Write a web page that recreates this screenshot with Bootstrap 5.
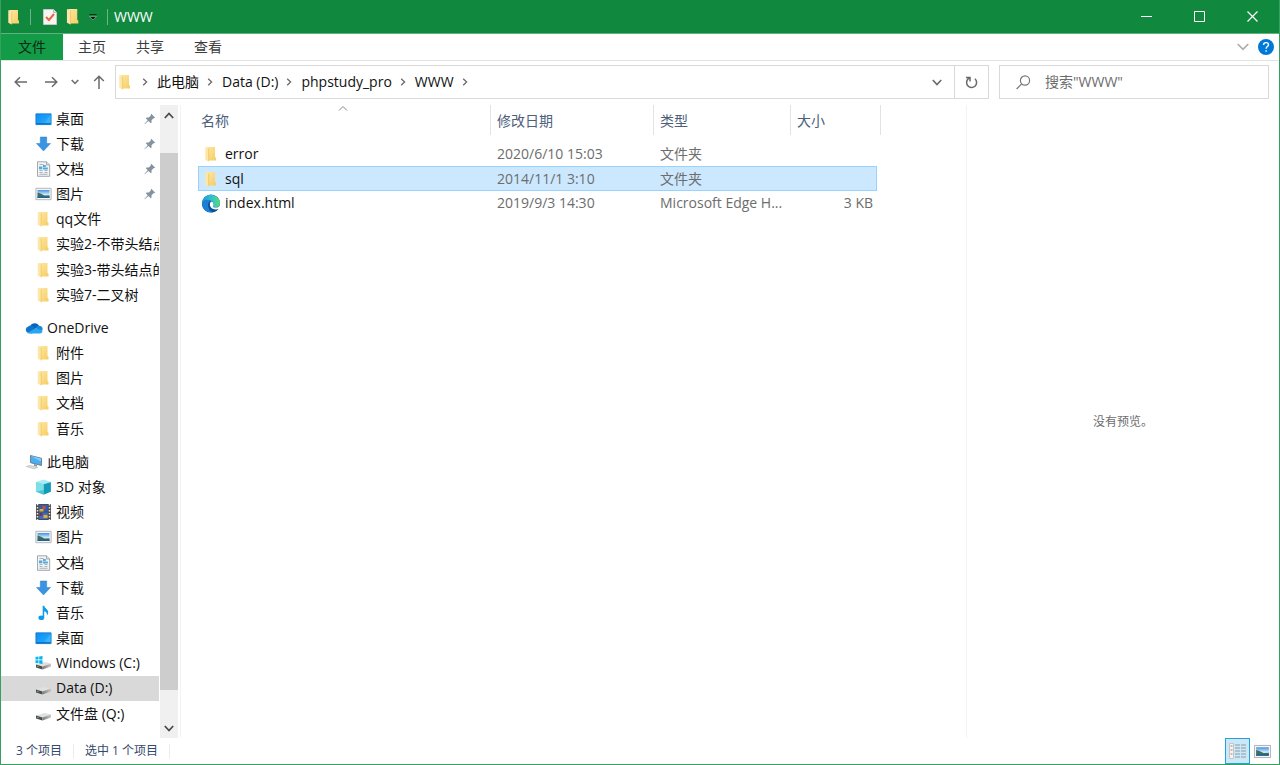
<!DOCTYPE html>
<html lang="zh-CN">
<head>
<meta charset="utf-8">
<meta name="viewport" content="width=device-width, initial-scale=1">
<title>WWW</title>
<link href="https://cdn.jsdelivr.net/npm/bootstrap@5.3.0/dist/css/bootstrap.min.css" rel="stylesheet">
<style>
  body { font: 14px/20px "Open Sans", "Noto Sans CJK SC", sans-serif; color: #111; background: #fff; }
  a { color: inherit; text-decoration: none; }
  button { border: 0; background: none; padding: 0; color: inherit; }
  svg { display: block; flex: none; }
  .ln { fill: none; stroke: currentColor; }
  .explorer { border: 1px solid #35a05f; border-top: 0; overflow: hidden; }
  .titlebar { background: #10893e; color: #fff; height: 33px; }
  .titlebar .app-icon { margin-left: 5px; }
  .quick { margin-left: 12px; gap: 6px; }
  .title-sep { width: 1px; height: 16px; background: #6cb488; }
  .caption-btn { width: 53px; height: 33px; display: grid; place-items: center; }
  .ribbon { height: 28px; border-top: 1px solid #5fb380; border-bottom: 1px solid #e2e3e4; color: #3c3c3c; }
  .ribbon-tab { width: 58px; text-align: center; }
  .ribbon-file { width: 62px; height: 26px; background: #149b48; color: #062b13; display: grid; place-items: center; }
  .nav-row { height: 44px; padding: 4px 10px 6px 13px; color: #6a6a6a; gap: 10px; }
  .nav-btns { width: 91px; }
  .box { border: 1px solid #d9d9d9; height: 34px; }
  .crumbs { color: #111; gap: 8px; margin-left: 7px; }
  .crumbs .chev { color: #6a6a6a; }
  .crumbs a + .chev { margin-left: -1px; }
  .refresh { width: 34px; height: 32px; border-left: 1px solid #d9d9d9; display: grid; place-items: center; }
  .search-box { flex: 0 0 270px; }
  .search-box input { border: 0; outline: 0; min-width: 0; color: #111; background: none; padding: 0; margin-left: 14px; }
  .search-box input::placeholder { color: #6d6d6d; opacity: 1; }
  .side { flex: 0 0 180px; border-right: 1px solid #f3f3f3; }
  .tree { padding: 1px 0 12px; width: 158px; }
  .tree li { flex: 1 0 25px; display: flex; }
  .tree a { display: flex; align-items: center; flex: 1; min-width: 0; padding-left: 34px; gap: 4px; white-space: nowrap; overflow: hidden; }
  .tree .root { margin-top: 8px; }
  .tree .root a { padding-left: 24px; }
  .tree .current { background: #d9d9d9; }
  .tree .tree-pin { margin-left: auto; margin-right: 3px; }
  .scroll { width: 18px; margin-left: 1px; background: #f0f0f0; color: #4a4a4a; }
  .scroll button { height: 20px; width: 18px; display: grid; place-items: center; }
  .scroll .thumb { flex: 1; background: #cdcdcd; margin: 28px 0; }
  .files { border-collapse: separate; border-spacing: 0; table-layout: fixed; width: 683px; margin-left: 17px; }
  .files th { height: 30px; font-weight: 400; color: #4c607a; border-right: 1px solid #e3e3e3; padding: 2px 6px 0; }
  .files th:first-child { padding-left: 3px; }
  .files td { height: 24px; padding: 0 6px; color: #6d6d6d; border: 0 solid #99d1ff; overflow: hidden; text-overflow: ellipsis; white-space: nowrap; }
  .files td:first-child { padding-left: 3px; color: #111; }
  .files td:nth-child(4) { padding-right: 4px; text-align: right; }
  .files .picked td { height: 25px; }
  .files .picked td:not(:last-child) { background: #cce8ff; border-width: 1px 0; }
  .files .picked td:first-child { border-left-width: 1px; padding-left: 2px; }
  .files .picked td:nth-child(4) { border-right-width: 1px; padding-right: 3px; }
  .files .gap-row td { height: 7px; padding: 0; }
  .c-name { width: 293px; } .c-date { width: 163px; } .c-type { width: 137px; } .c-size { width: 86px; } .c-end { width: 4px; }
  .sort-mark { left: 139px; top: 0; color: #8a8a8a; }
  .preview { flex: 0 0 313px; border-left: 1px solid #f3f3f3; font-size: 12px; color: #6d6d6d; }
  .status { height: 26px; font-size: 12px; color: #33496b; padding-left: 15px; gap: 11px; }
  .status-sep { width: 1px; height: 14px; background: #ececec; }
  .view-btn { width: 25px; height: 26px; display: grid; place-items: center; }
  .view-on { background: #cbe8f6; border: 1px solid #26a0da; }
</style>
</head>
<body>
<svg width="0" height="0" class="position-absolute" aria-hidden="true">
  <defs>
    <linearGradient id="gFold" x1="0" x2="1" y2="1"><stop offset="0" stop-color="#ffe9a6"/><stop offset="1" stop-color="#f5cc62"/></linearGradient>
    <linearGradient id="gDesk" x2="1" y2="1"><stop offset="0" stop-color="#0a8bf2"/><stop offset="1" stop-color="#2cb1ff"/></linearGradient>
    <linearGradient id="gSky" y2="1" x2="0"><stop offset="0" stop-color="#4a8fe0"/><stop offset=".6" stop-color="#d6efff"/></linearGradient>
    <linearGradient id="gEdge" x1="0" x2="1"><stop offset="0" stop-color="#1b9de2"/><stop offset=".6" stop-color="#35c6c4"/><stop offset="1" stop-color="#5bdc6a"/></linearGradient>
    <linearGradient id="gDrive" x2="1"><stop offset="0" stop-color="#7b7b7b"/><stop offset="1" stop-color="#c8c8c8"/></linearGradient>
    <symbol id="folder" viewBox="0 0 16 16"><path d="M3.500 1h8.500v10l1 .7v2.800H4.500z" fill="url(#gFold)"/><path d="M2.300 1L5.700 2.300V15.500L2.300 13.800z" fill="#fde6a6"/><path d="M5.700 2.300V15.300" stroke="#e9bd55" stroke-width=".6"/></symbol>
    <symbol id="desktop" viewBox="0 0 16 16"><path d="M.4 2.800h15.200v10.800H.4z" fill="url(#gDesk)" stroke="#1479c9" stroke-width=".8"/><path d="M1 12.300h14v1H1z" fill="#0b5fa8"/><path d="M9 12L15 4v8z" fill="#4dbfff" opacity=".5"/></symbol>
    <symbol id="download" viewBox="0 0 16 16"><path d="M4.800 1h6.400v6.500H15L8 15 1 7.500h3.800z" fill="#3a94e2" stroke="#2a7fca" stroke-width=".5"/></symbol>
    <symbol id="document" viewBox="0 0 16 16"><path d="M2 .8h9L14.200 4v11.300H2z" fill="#f1f3f4" stroke="#9a9fa2" stroke-width=".9"/><path d="M11 .8V4h3.200" fill="#dbe1e5" stroke="#8c9296" stroke-width=".7"/><path d="M4 3.500h4M4 9.500h3M9 9.500h3M4 11.500h3M9 11.500h3M4 13.300h8" stroke="#a3adb3" stroke-width=".9"/><path d="M3.500 5.500h3.300v2.800H3.500zM7.500 4h2.800v2H7.500zM7.500 6.600h4.800v1.800H7.500z" fill="#51a9dc"/></symbol>
    <symbol id="picture" viewBox="0 0 16 16"><path d="M.4 2.300h15.200v11.400H.4z" fill="#f6f6f6" stroke="#a0a6aa" stroke-width=".8"/><path d="M2 4h12v8H2z" fill="url(#gSky)"/><path d="M2 6.500l3 1 4 2 5-.3V12H2z" fill="#39705c"/><path d="M2 10.500l12 .2V12H2z" fill="#285f99"/></symbol>
    <symbol id="cloud" viewBox="0 0 18 12"><path d="M5 4.200A5.200 5.200 0 0 1 14 3.500L8 9z" fill="#0a63b8"/><path d="M3.500 11A3.400 3.400 0 0 1 3.200 4.400 4 4 0 0 1 7.500 4L12 8l-5 3.500z" fill="#0c75d0"/><path d="M11 5a4 4 0 0 1 3.500-1.300A3.700 3.700 0 0 1 17.500 8L12 9z" fill="#1589dc"/><path d="M2 11L10.500 6.300 17.300 8.300A2.500 2.500 0 0 1 15 11.500H4z" fill="#28a8ea"/></symbol>
    <symbol id="pc" viewBox="0 0 18 16"><path d="M5.500 1.500l11 2.800v7.200l-11-2.800z" fill="#49aff0" stroke="#5e6f7d" stroke-width=".8"/><path d="M6 2l10 2.600v3z" fill="#83cdf8"/><path d="M9 10l3 .8v2L9 12z" fill="#8c979e"/><path d="M1 12.500l4-1.200 8 2.200-4 1.500z" fill="#d4d9dc" stroke="#a5adb2" stroke-width=".4"/></symbol>
    <symbol id="cube" viewBox="0 0 16 16"><path d="M.6 3L8 .4 15.400 3 8 5.200z" fill="#a8edf3"/><path d="M.6 3L8 5.200v10.600L.6 12.800z" fill="#45c4d4"/><path d="M15.400 3L8 5.200v10.600l7.400-3z" fill="#149bb8"/><path d="M.6 3L8 5.200V11L.6 12.800z" fill="#7fdfe7"/></symbol>
    <symbol id="film" viewBox="0 0 16 16"><path d="M.5 0h15v16H.5z" fill="#4d4a4c"/><path d="M3.700 1h8.600v6.500H3.700z" fill="#2f5cbb"/><path d="M3.700 8.500h8.600V15H3.700z" fill="#3d6cc7"/><path d="M2 0v16M14 0v16" stroke="#e6e6e6" stroke-width="1.500" stroke-dasharray="1.500 1.500"/><path d="M7 2h3v3H7z" fill="#d9482f"/><path d="M4 5h4v2.500H4zM8 11h4v3H8z" fill="#dfb22e"/><path d="M4 9h3v3H4z" fill="#73315f"/></symbol>
    <symbol id="music" viewBox="0 0 16 16"><ellipse cx="5.800" cy="12.800" rx="2.900" ry="2.300" fill="#109be8"/><path d="M7.200.8H8.700c.3 2.500 4 3.500 4 6.500 0 1.400-.5 2.400-1.300 3.200.4-2.600-1-3.700-2.700-4.200v6.500H7.200z" fill="#109be8"/></symbol>
    <symbol id="drive" viewBox="0 0 16 16"><path d="M.5 9.500L9 7l6.500 1.500-8.500 3z" fill="#e0e0e0"/><path d="M.5 9.500L7 11.500V14.500L.5 12.500z" fill="#484c4a"/><path d="M7 11.500l8.500-3v3L7 14.500z" fill="url(#gDrive)"/><path d="M1.500 11.200l1.600.5" stroke="#70d468" stroke-width=".9"/></symbol>
    <symbol id="windrive" viewBox="0 0 16 16"><use href="#drive"/><path d="M0 2l3-.4v3H0zM3.700 1.500L7 1v3.600H3.700zM0 5.300h3v3L0 7.900zM3.700 5.300H7V9l-3.300-.5z" fill="#08b4ee"/></symbol>
    <symbol id="pin" viewBox="0 0 12 12"><path d="M7.300.8l3.900 3.900-1.200.6-.5-.1-2 2 .1 2.200-.8.800L4.500 7.900.7 11.300l-.3-.2 3.300-3.900L1.800 5.200l.8-.8 2.200.1 2-2-.1-.5z" fill="#8493a0"/></symbol>
    <symbol id="edge" viewBox="0 0 20 20"><circle cx="10" cy="10" r="9.500" fill="#1164b0"/><path d="M.6 9A9.500 9.500 0 0 1 19.500 9.500c0 3-2.200 4.500-4.700 4.500-2 0-3-.6-2.700-1.300.9-1.300 1-2.400.4-3.700C10.800 5.800 3.500 4.800.6 9z" fill="url(#gEdge)"/><path d="M.5 10C1 6 7 5 10 7.200c-3 .8-3.800 3.600-2.700 6.300 1 2.500 3 4.600 5.300 5.600C6 20.500.4 16 .5 10z" fill="#1c7fd4"/><path d="M10 7.500c-3 2.500-.5 7.500 4 8.200 1.700.2 3-.1 4.200-.8.300-.1.400.1.200.4A9 9 0 0 1 12.600 19C7 18 5 10 10 7.500z" fill="#0c4f93"/><path d="M10 8c2.400.2 3.500 2.500 2.200 4.600-.5 1 .6 1.700 2.700 1.700 1.800 0 3.300-.7 4.200-2l.9 2.200-1.300 1c-2.800 1.500-7.800 1-9.300-2C8.400 11.500 8.700 9.500 10 8z" fill="#fff"/></symbol>
    <symbol id="c-right" viewBox="0 0 8 8"><path class="ln" stroke-width="1.300" d="M2.200.7L5.600 4 2.200 7.300"/></symbol>
  </defs>
</svg>

<div class="explorer d-flex flex-column vh-100">
  <header class="titlebar d-flex align-items-center flex-shrink-0">
    <svg class="app-icon" width="16" height="16"><use href="#folder"/></svg>
    <span class="title-sep ms-2"></span>
    <div class="quick d-flex align-items-center">
      <button aria-label="属性"><svg width="14" height="16" viewBox="0 0 14 16"><path d="M.5.5h10l3 3v12H.5z" fill="#f7f4f4" stroke="#c6c9c8"/><path d="M10.500.5v3h3" fill="#ddd" stroke="#bbb"/><path d="M3 8l3 3 5-6" fill="none" stroke="#e8663c" stroke-width="2"/></svg></button>
      <button aria-label="新建文件夹"><svg width="20" height="17"><use href="#folder"/></svg></button>
      <button aria-label="自定义快速访问工具栏"><svg width="8" height="8" viewBox="0 0 8 8"><path d="M.5 1.500h7" stroke="#082c15"/><path d="M.5 3.500h7L4 7z" fill="#061b0d" stroke="#b8d8c4" stroke-width=".5"/></svg></button>
      <span class="title-sep ms-1"></span>
      <span>WWW</span>
    </div>
    <div class="d-flex ms-auto">
      <button class="caption-btn" aria-label="最小化"><svg width="11" height="11"><path class="ln" d="M0 5.500h11"/></svg></button>
      <button class="caption-btn" aria-label="最大化"><svg width="11" height="11"><path class="ln" d="M.5.5h10v10H.5z"/></svg></button>
      <button class="caption-btn" aria-label="关闭"><svg width="11" height="11"><path class="ln" stroke-width="1.200" d="M.5.5l10 10M10.500.5l-10 10"/></svg></button>
    </div>
  </header>

  <nav class="ribbon d-flex align-items-center flex-shrink-0">
    <a href="#" class="ribbon-file">文件</a>
    <a href="#" class="ribbon-tab">主页</a>
    <a href="#" class="ribbon-tab">共享</a>
    <a href="#" class="ribbon-tab">查看</a>
    <button class="ms-auto" aria-label="展开功能区"><svg width="12" height="8" viewBox="0 0 12 8" color="#adadad"><path class="ln" stroke-width="1.700" d="M.7 1L6 6.300 11.300 1"/></svg></button>
    <button class="ms-2 me-1" aria-label="帮助"><svg width="18" height="18" viewBox="0 0 18 18"><circle cx="9" cy="9" r="8" fill="#0078d7"/><path d="M6.500 7C6.500 3.800 11.500 4 11.500 6.800 11.500 8.600 9.100 8.600 9.100 10.800M9.100 12.200v1.500" fill="none" stroke="#fff" stroke-width="1.400"/></svg></button>
  </nav>

  <div class="nav-row d-flex align-items-center flex-shrink-0">
    <div class="nav-btns d-flex align-items-center justify-content-between">
      <button aria-label="后退"><svg width="13" height="12"><path class="ln" stroke-width="1.500" d="M13 6H1.500M6 1.200L1.200 6 6 10.800"/></svg></button>
      <button class="ms-1" aria-label="前进"><svg width="13" height="12"><path class="ln" stroke-width="1.500" d="M0 6h11.500M7 1.200L11.800 6 7 10.800"/></svg></button>
      <button aria-label="最近浏览的位置"><svg width="8" height="6"><path class="ln" stroke-width="1.500" d="M.7 1L4 4.500 7.300 1"/></svg></button>
      <button aria-label="上移"><svg width="12" height="14"><path class="ln" stroke-width="1.500" d="M6 14V1.500M1.200 6L6 1.200 10.800 6"/></svg></button>
    </div>
    <div class="box d-flex align-items-center flex-grow-1">
      <svg width="18" height="16"><use href="#folder"/></svg>
      <div class="crumbs d-flex align-items-center">
        <svg class="chev" width="8" height="8"><use href="#c-right"/></svg><a href="#">此电脑</a>
        <svg class="chev" width="8" height="8"><use href="#c-right"/></svg><a href="#">Data (D:)</a>
        <svg class="chev" width="8" height="8"><use href="#c-right"/></svg><a href="#">phpstudy_pro</a>
        <svg class="chev" width="8" height="8"><use href="#c-right"/></svg><a href="#">WWW</a>
        <svg class="chev" width="8" height="8"><use href="#c-right"/></svg>
      </div>
      <button class="ms-auto me-2 pe-1" aria-label="历史记录"><svg width="10" height="7"><path class="ln" stroke-width="1.600" d="M.8 1L5 5.500 9.200 1"/></svg></button>
      <button class="refresh" aria-label="刷新"><svg width="13" height="13" viewBox="0 0 13 13"><path class="ln" stroke-width="1.500" d="M4 2.200A5 5 0 1 0 10 2.800M1 1.500h4v4" /></svg></button>
    </div>
    <label class="box search-box d-flex align-items-center ps-3">
      <svg width="15" height="15" viewBox="0 0 15 15" color="#777"><circle class="ln" cx="9" cy="5.500" r="4.600" stroke-width="1.200"/><path class="ln" stroke-width="1.200" d="M5.700 8.900L.6 14"/></svg>
      <input class="flex-grow-1" type="search" aria-label="搜索" placeholder='搜索"WWW"'>
    </label>
  </div>

  <main class="d-flex flex-grow-1">
    <aside class="side d-flex">
      <ul class="tree list-unstyled d-flex flex-column mb-0">
        <li><a href="#"><svg width="17" height="16"><use href="#desktop"/></svg>桌面<svg class="tree-pin" width="12" height="12"><use href="#pin"/></svg></a></li>
        <li><a href="#"><svg width="17" height="16"><use href="#download"/></svg>下载<svg class="tree-pin" width="12" height="12"><use href="#pin"/></svg></a></li>
        <li><a href="#"><svg width="17" height="16"><use href="#document"/></svg>文档<svg class="tree-pin" width="12" height="12"><use href="#pin"/></svg></a></li>
        <li><a href="#"><svg width="17" height="16"><use href="#picture"/></svg>图片<svg class="tree-pin" width="12" height="12"><use href="#pin"/></svg></a></li>
        <li><a href="#"><svg width="17" height="16"><use href="#folder"/></svg>qq文件</a></li>
        <li><a href="#"><svg width="17" height="16"><use href="#folder"/></svg>实验2-不带头结点</a></li>
        <li><a href="#"><svg width="17" height="16"><use href="#folder"/></svg>实验3-带头结点的</a></li>
        <li><a href="#"><svg width="17" height="16"><use href="#folder"/></svg>实验7-二叉树</a></li>
        <li class="root"><a href="#"><svg width="18" height="12"><use href="#cloud"/></svg>OneDrive</a></li>
        <li><a href="#"><svg width="17" height="16"><use href="#folder"/></svg>附件</a></li>
        <li><a href="#"><svg width="17" height="16"><use href="#folder"/></svg>图片</a></li>
        <li><a href="#"><svg width="17" height="16"><use href="#folder"/></svg>文档</a></li>
        <li><a href="#"><svg width="17" height="16"><use href="#folder"/></svg>音乐</a></li>
        <li class="root"><a href="#"><svg width="18" height="16"><use href="#pc"/></svg>此电脑</a></li>
        <li><a href="#"><svg width="17" height="16"><use href="#cube"/></svg>3D 对象</a></li>
        <li><a href="#"><svg width="17" height="16"><use href="#film"/></svg>视频</a></li>
        <li><a href="#"><svg width="17" height="16"><use href="#picture"/></svg>图片</a></li>
        <li><a href="#"><svg width="17" height="16"><use href="#document"/></svg>文档</a></li>
        <li><a href="#"><svg width="17" height="16"><use href="#download"/></svg>下载</a></li>
        <li><a href="#"><svg width="17" height="16"><use href="#music"/></svg>音乐</a></li>
        <li><a href="#"><svg width="17" height="16"><use href="#desktop"/></svg>桌面</a></li>
        <li><a href="#"><svg width="17" height="16"><use href="#windrive"/></svg>Windows (C:)</a></li>
        <li class="current"><a href="#"><svg width="17" height="16"><use href="#drive"/></svg>Data (D:)</a></li>
        <li><a href="#"><svg width="17" height="16"><use href="#drive"/></svg>文件盘 (Q:)</a></li>
      </ul>
      <div class="scroll d-flex flex-column">
        <button aria-label="向上滚动"><svg width="10" height="7"><path class="ln" stroke-width="1.800" d="M.8 6L5 1.500 9.200 6"/></svg></button>
        <div class="thumb"></div>
        <button aria-label="向下滚动"><svg width="10" height="7"><path class="ln" stroke-width="1.800" d="M.8 1L5 5.500 9.200 1"/></svg></button>
      </div>
    </aside>

    <section class="flex-grow-1">
      <table class="files">
        <colgroup><col class="c-name"><col class="c-date"><col class="c-type"><col class="c-size"><col class="c-end"></colgroup>
        <thead>
          <tr>
            <th class="position-relative">名称<svg class="sort-mark position-absolute" width="12" height="6"><path class="ln" d="M2 5.500L6 1.500 10 5.500"/></svg></th>
            <th>修改日期</th><th>类型</th><th colspan="2">大小</th>
          </tr>
        </thead>
        <tbody>
          <tr class="gap-row"><td colspan="5"></td></tr>
          <tr><td><div class="d-flex align-items-center gap-1"><svg width="20" height="16"><use href="#folder"/></svg>error</div></td><td>2020/6/10 15:03</td><td>文件夹</td><td></td><td></td></tr>
          <tr class="picked"><td><div class="d-flex align-items-center gap-1"><svg width="20" height="16"><use href="#folder"/></svg>sql</div></td><td>2014/11/1 3:10</td><td>文件夹</td><td></td><td></td></tr>
          <tr><td><div class="d-flex align-items-center gap-1"><svg width="20" height="19"><use href="#edge"/></svg>index.html</div></td><td>2019/9/3 14:30</td><td>Microsoft Edge H...</td><td>3 KB</td><td></td></tr>
        </tbody>
      </table>
    </section>

    <aside class="preview d-flex align-items-center justify-content-center">没有预览。</aside>
  </main>

  <footer class="status d-flex align-items-center flex-shrink-0">
    <span>3 个项目</span><span class="status-sep"></span>
    <span>选中 1 个项目</span><span class="status-sep"></span>
    <div class="d-flex ms-auto me-1">
      <button class="view-btn view-on" aria-label="详细信息"><svg width="17" height="16" viewBox="0 0 17 16"><path d="M.5.5h4v15h-4z" fill="#f4f4f4" stroke="#b9bec2" stroke-width=".8"/><path d="M1.500 3h2M1.500 7h2M1.500 11h2" stroke="#c4776a" stroke-width="1.200"/><path d="M6 2h5M6 5h5M6 8h5M6 11h5M6 14h5M12 2h5M12 5h5M12 8h5M12 11h5M12 14h5" stroke="#8b9aa5"/></svg></button>
      <button class="view-btn" aria-label="大缩略图"><svg width="17" height="17"><use href="#picture"/></svg></button>
    </div>
  </footer>
</div>
<script src="https://cdn.jsdelivr.net/npm/bootstrap@5.3.0/dist/js/bootstrap.bundle.min.js"></script>
</body>
</html>
